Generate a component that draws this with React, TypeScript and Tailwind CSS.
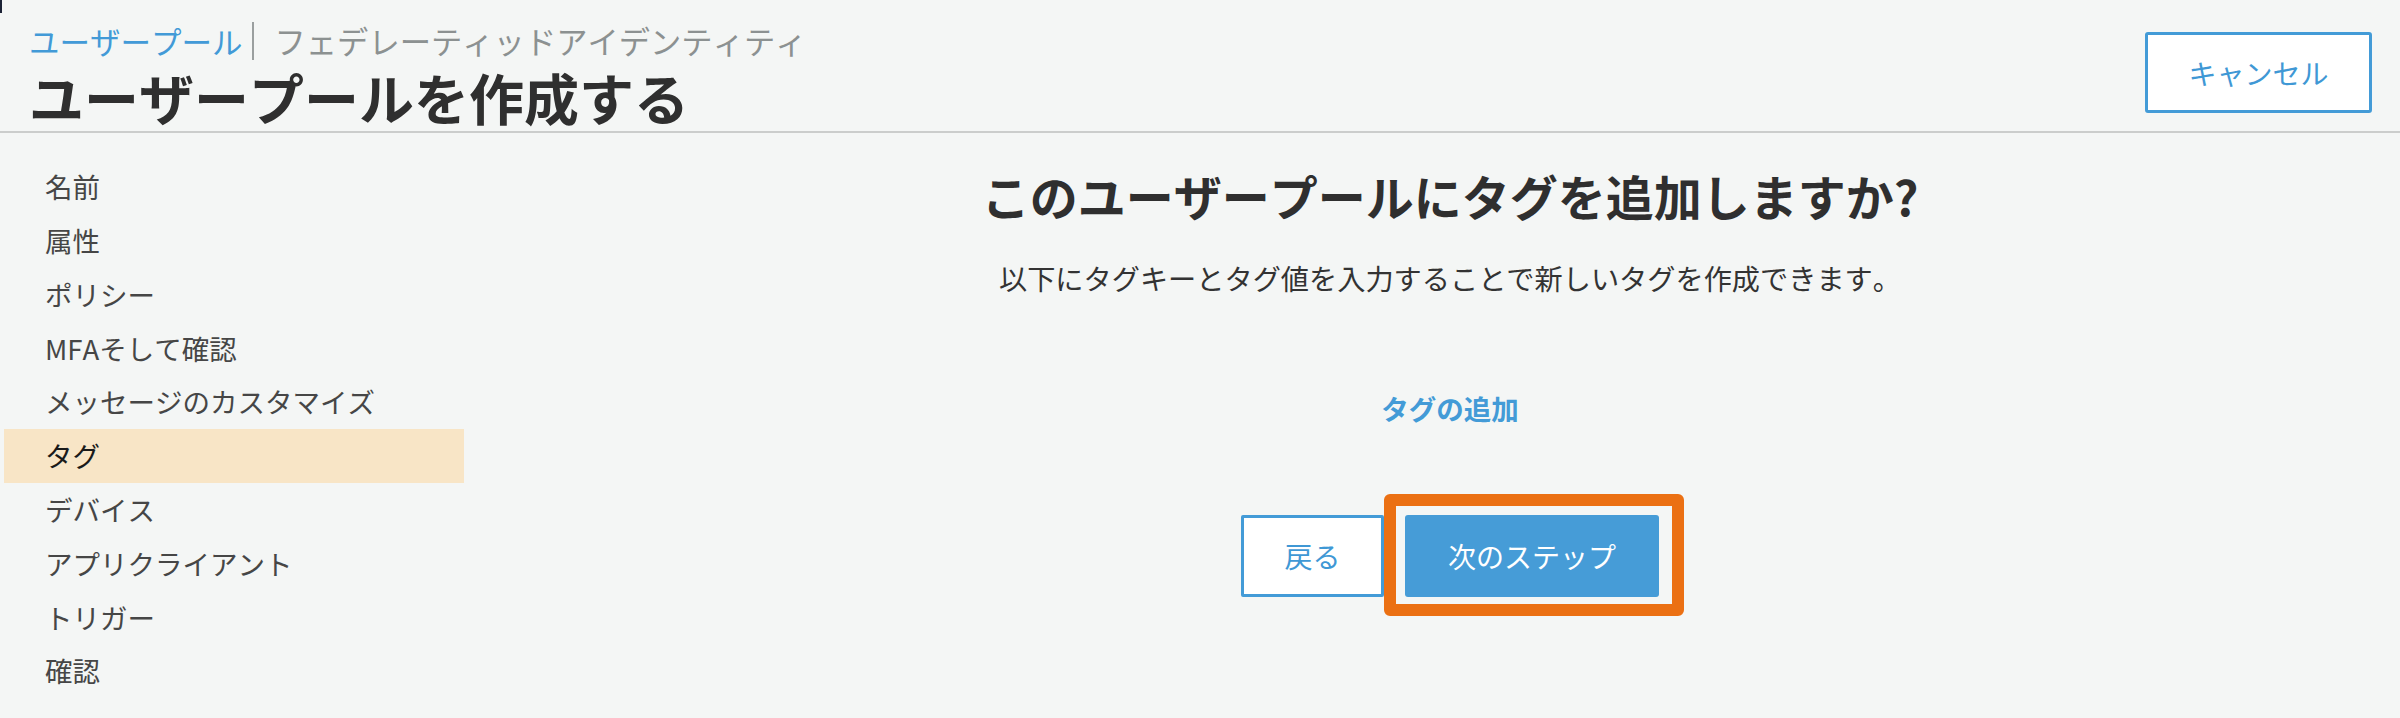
import React from "react";

const items = [
  "名前",
  "属性",
  "ポリシー",
  "MFAそして確認",
  "メッセージのカスタマイズ",
  "タグ",
  "デバイス",
  "アプリクライアント",
  "トリガー",
  "確認",
];

export default function App() {
  const font = { fontFamily: '"Noto Sans CJK JP", "Noto Sans", sans-serif' };
  return (
    <div className="relative min-h-[718px] w-full bg-[#f4f6f5] text-[#333] [font-kerning:none]" style={font}>
      <div className="absolute left-0 top-0 h-[13px] w-[2px] bg-[#1c2336]" />
      {/* Header */}
      <div className="flex items-start justify-between border-b-2 border-[#cbcdcc] h-[133px] pl-[29px] pr-[28px]">
        <div className="flex flex-col pt-[22px]">
          <div className="flex items-center leading-[36px]">
            <span className="text-[30.5px] text-[#429ad7]">ユーザープール</span>
            <span className="ml-[9px] mr-[21px] h-[38px] w-[2px] bg-[#9a9f9f]" />
            <span className="text-[31.3px] text-[#8c9191]">フェデレーティッドアイデンティティ</span>
          </div>
          <h1 className="mt-[6px] text-[55px] leading-[60px] font-bold text-[#2f2f2f]">
            ユーザープールを作成する
          </h1>
        </div>
        <button className="mt-[32px] h-[81px] w-[227px] rounded-[3px] border-[3px] border-[#439bd7] bg-white text-[28px] text-[#3f98d5]">
          キャンセル
        </button>
      </div>

      <div className="flex">
        {/* Sidebar */}
        <div className="w-[500px] shrink-0 pl-[4px] pt-[27px]">
          <ul className="w-[460px]">
            {items.map((it) => (
              <li
                key={it}
                className={
                  it === "タグ"
                    ? "flex h-[53.8px] items-center bg-[#f8e5c6] pl-[41px] text-[27.5px] text-[#1a1a1a]"
                    : "flex h-[53.8px] items-center pl-[41px] text-[27.5px] text-[#464646]"
                }
              >
                {it}
              </li>
            ))}
          </ul>
        </div>

        {/* Main */}
        <div className="flex flex-1 flex-col items-center pt-[34px] text-center">
          <h2 className="text-[48px] leading-[56px] font-bold text-[#2f2f2f]">
            このユーザープールにタグを追加しますか?
          </h2>
          <p className="mt-[35px] text-[28.2px] leading-[40px] text-[#333]">
            以下にタグキーとタグ値を入力することで新しいタグを作成できます。
          </p>
          <a className="mt-[90px] text-[27.5px] leading-[40px] font-bold text-[#439bd7]">
            タグの追加
          </a>
          <div className="mt-[87px] flex items-center gap-[21px]">
            <button className="h-[82px] w-[143px] rounded-[2px] border-[3px] border-[#439bd7] bg-white text-[28px] text-[#3f98d5]">
              戻る
            </button>
            <div className="relative">
              <div className="absolute -left-[21px] -top-[21px] -right-[25px] -bottom-[19px] rounded-[6px] border-[12px] border-[#eb7013]" />
              <button className="relative h-[82px] w-[254px] rounded-[3px] bg-[#469cd7] text-[28px] text-white">
                次のステップ
              </button>
            </div>
          </div>
        </div>
      </div>
    </div>
  );
}
